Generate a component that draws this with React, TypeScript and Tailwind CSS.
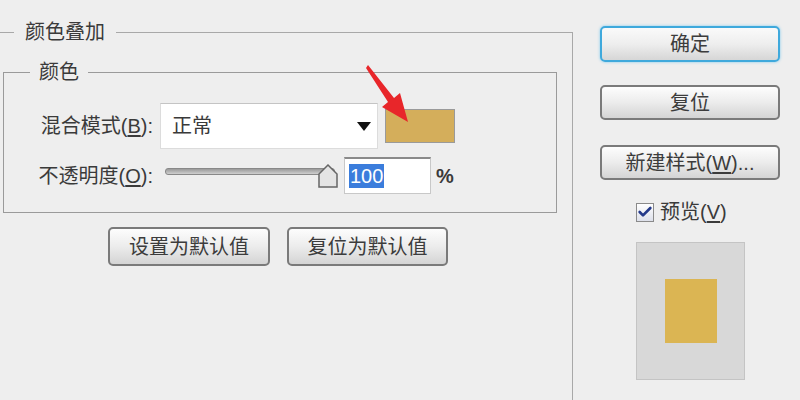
import { Check } from "lucide-react";

const font = "font-['Liberation_Sans','Noto_Sans_CJK_SC',sans-serif]";

function GreyButton({ children, className = "" }: { children: React.ReactNode; className?: string }) {
  return (
    <button
      className={`flex items-center justify-center rounded-[5px] border-2 border-[#7a7a7a] bg-gradient-to-b from-[#fdfdfd] via-[#ececec] to-[#d4d4d4] text-[20px] leading-none text-[#3c3c3c] ${className}`}
    >
      {children}
    </button>
  );
}

export default function App() {
  return (
    <div className={`relative flex h-[400px] w-[800px] overflow-hidden bg-[#eeeeee] ${font}`}>
      {/* Left: 颜色叠加 group */}
      <fieldset className="ml-[-10px] mt-[22px] h-[420px] w-[583px] shrink-0 border border-[#a8a8a8]">
        <legend className="ml-[23px] px-[11px] text-[20px] leading-[20px] text-[#3a3a3a]">颜色叠加</legend>

        <fieldset className="ml-[12px] mt-[20px] w-[554px] border border-[#9a9a9a] pt-[21px] pb-[18px]">
          <legend className="ml-[26px] px-[9px] text-[20px] leading-[20px] text-[#3a3a3a]">颜色</legend>

          {/* Blend mode row */}
          <div className="flex items-center">
            <div className="w-[149px] text-right text-[20px] text-[#3a3a3a]">
              混合模式(<span className="underline underline-offset-2">B</span>):
            </div>
            <div className="ml-[7px] flex h-[46px] w-[218px] items-center justify-between border border-[#dcdcdc] border-t-[#c4c4c4] bg-white pl-[11px] pr-[6px]">
              <span className="text-[20px] text-[#3a3a3a]">正常</span>
              <svg width="14" height="9" viewBox="0 0 14 9">
                <path d="M0 0 L14 0 L7 9 Z" fill="#111" />
              </svg>
            </div>
            <div className="ml-[7px] h-[34px] w-[70px] border border-[#9a9a9a] bg-[#d4ae5b]" />
          </div>

          {/* Opacity row */}
          <div className="mt-[8px] flex items-center">
            <div className="w-[149px] text-right text-[20px] text-[#3a3a3a]">
              不透明度(<span className="underline underline-offset-2">O</span>):
            </div>
            <div className="relative ml-[12px] h-[26px] w-[174px]">
              <div className="mt-[5px] h-[7px] w-[170px] rounded-[3px] border border-[#888] bg-gradient-to-b from-[#9a9a9a] to-[#cfcfcf]" />
              <svg className="absolute left-[153px] top-[1px]" width="20" height="24" viewBox="0 0 20 24">
                <path d="M10 1 L19 10 L19 23 L1 23 L1 10 Z" fill="#e4e4e4" stroke="#666" strokeWidth="1.5" />
              </svg>
            </div>
            <div className="ml-[5px] flex h-[37px] w-[87px] items-center border border-[#c8c8c8] border-t-2 border-t-[#8a8a8a] bg-white pl-[4px]">
              <span className="bg-[#3b7ddc] px-[1px] text-[20px] leading-[24px] text-white">100</span>
            </div>
            <span className="ml-[5px] text-[20px] font-bold text-[#3a3a3a]">%</span>
          </div>
        </fieldset>

        <div className="ml-[117px] mt-[14px] flex gap-[17px]">
          <GreyButton className="h-[39px] w-[162px]">设置为默认值</GreyButton>
          <GreyButton className="h-[39px] w-[161px]">复位为默认值</GreyButton>
        </div>
      </fieldset>

      {/* Right: action column */}
      <div className="ml-[27px] flex w-[180px] flex-col pt-[26px]">
        <button className="flex h-[36px] items-center justify-center rounded-[5px] border-2 border-[#3fa9dc] bg-gradient-to-b from-[#fafafa] via-[#eeeeee] to-[#d6d6d6] text-[20px] leading-none text-[#3c3c3c] shadow-[0_0_3px_#7cc8ee]">
          确定
        </button>
        <GreyButton className="mt-[23px] h-[35px]">复位</GreyButton>
        <GreyButton className="mt-[25px] h-[35px]">
          新建样式(<span className="underline underline-offset-2">W</span>)...
        </GreyButton>

        <div className="ml-[36px] mt-[17px] flex items-center gap-[6px]">
          <div className="flex h-[19px] w-[18px] items-center justify-center border border-[#8a8a8a] bg-gradient-to-b from-[#ffffff] to-[#dde0ea]">
            <Check size={16} strokeWidth={4} className="text-[#23398a]" />
          </div>
          <span className="text-[20px] text-[#3a3a3a]">
            预览(<span className="underline underline-offset-2">V</span>)
          </span>
        </div>

        <div className="ml-[36px] mt-[15px] flex h-[138px] w-[109px] items-center justify-center border border-[#c4c4c4] bg-[#d8d8d8]">
          <div className="h-[64px] w-[52px] bg-[#dbb553]" />
        </div>
      </div>

      {/* Red annotation arrow */}
      <svg className="absolute left-0 top-0" width="800" height="400" viewBox="0 0 800 400">
        <path d="M366 68 L368 65 L394 98 L400 93 L408 122 L382 107 L388 102 Z" fill="#e8262a" />
      </svg>
    </div>
  );
}
